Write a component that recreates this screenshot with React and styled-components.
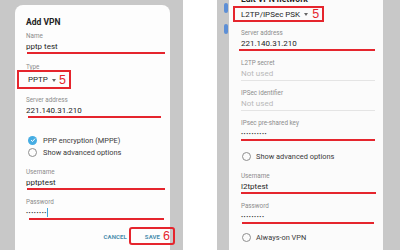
import React from "react";
import styled, { createGlobalStyle } from "styled-components";

const RED = "#e5252d";

const Global = createGlobalStyle`
  body {
    margin: 0;
    background: #fff;
    font-family: Roboto, "Liberation Sans", sans-serif;
  }
`;

const Page = styled.div`
  width: 400px;
  height: 250px;
  display: flex;
  justify-content: space-between;
  overflow: hidden;
  background: #fff;
`;

const Panel = styled.div`
  width: 183px;
  height: 250px;
  background: #c8c8c8;
  display: flex;
  padding-left: ${(p) => p.$padLeft || 0}px;
  box-sizing: border-box;
  overflow: hidden;
`;

const Gutter = styled.div`
  width: 12px;
  flex-shrink: 0;
  display: flex;
  flex-direction: column;
  padding: 3px 0 0 7px;
  box-sizing: border-box;
`;

const Pill = styled.div`
  width: 4px;
  height: 10px;
  border-radius: 2px;
  background: #5d8fd6;
  margin-bottom: 11px;
`;

const Card = styled.div`
  width: ${(p) => p.$width}px;
  flex-shrink: 0;
  margin-top: ${(p) => p.$top}px;
  height: 300px;
  background: ${(p) => p.$bg};
  border-radius: 8px 8px 0 0;
  padding: ${(p) => p.$padTop}px ${(p) => p.$padRight}px 0 ${(p) => p.$padLeft}px;
  box-sizing: border-box;
  display: flex;
  flex-direction: column;
`;

const Title = styled.div`
  font-size: 8.5px;
  line-height: 14px;
  font-weight: 700;
  color: #222;
`;

const Label = styled.div`
  font-size: 6.3px;
  line-height: 9px;
  color: #8c8c8c;
  margin-top: ${(p) => p.$mt || 0}px;
`;

const Value = styled.div`
  font-size: 8px;
  line-height: 11px;
  color: ${(p) => (p.$muted ? "#b9b9b9" : "#262626")};
  display: flex;
  align-items: center;
`;

const Dots = styled.span`
  font-size: 6px;
  letter-spacing: 0.6px;
  color: #222;
`;

const Cursor = styled.span`
  width: 1px;
  height: 9px;
  background: #3fa5dc;
  margin-left: 0;
`;

const Underline = styled.div`
  height: 2px;
  background: ${RED};
  margin-left: ${(p) => p.$ml || 0}px;
  margin-right: ${(p) => p.$mr || 0}px;
`;

const Divider = styled.div`
  height: 1px;
  background: #e4e4e4;
  margin-top: 1px;
`;

const TypeBox = styled.div`
  align-self: flex-start;
  display: flex;
  align-items: center;
  height: ${(p) => p.$h}px;
  box-sizing: border-box;
  border: 2px solid ${RED};
  margin-top: ${(p) => p.$mt}px;
  margin-left: ${(p) => p.$ml}px;
  padding: 0 3px 0 ${(p) => p.$pl}px;
  font-size: 8px;
  color: #262626;
`;

const Caret = styled.span`
  width: 0;
  height: 0;
  border-left: 2.5px solid transparent;
  border-right: 2.5px solid transparent;
  border-top: 3px solid #666;
  margin: 1px 0 0 4px;
`;

const Mark = styled.span`
  font-family: "Liberation Sans", Arial, sans-serif;
  font-size: 12.5px;
  line-height: 12px;
  color: ${RED};
  margin-left: ${(p) => p.$ml || 3}px;
`;

const Option = styled.div`
  display: flex;
  align-items: center;
  height: 12px;
  margin-top: ${(p) => p.$mt || 0}px;
  margin-left: ${(p) => p.$ml || 0}px;
  font-size: 7.4px;
  color: #3a3a3a;
`;

const Radio = styled.span`
  width: 9px;
  height: 9px;
  border-radius: 50%;
  box-sizing: border-box;
  border: ${(p) => (p.$checked ? "none" : "1px solid #8f8f8f")};
  background: ${(p) => (p.$checked ? "#46ade3" : "transparent")};
  margin-right: ${(p) => p.$gap}px;
  display: flex;
  align-items: center;
  justify-content: center;
  flex-shrink: 0;
`;

const Actions = styled.div`
  display: flex;
  justify-content: flex-end;
  align-items: center;
  margin-top: 7.5px;
  margin-right: -10px;
`;

const Action = styled.span`
  font-size: 6px;
  font-weight: 700;
  color: #4c8fae;
  letter-spacing: 0.1px;
`;

const SaveBox = styled.div`
  display: flex;
  align-items: center;
  height: 18px;
  box-sizing: border-box;
  border: 2px solid ${RED};
  border-radius: 3px;
  padding: 0 3px 0 14px;
  margin-left: 2px;
`;

const Field = ({ label, value, mt, muted, children }) => (
  <>
    <Label $mt={mt}>{label}</Label>
    <Value $muted={muted}>{children || value}</Value>
  </>
);

const Check = () => (
  <svg width="6" height="6" viewBox="0 0 6 6">
    <path d="M1 3.1 L2.5 4.5 L5 1.6" fill="none" stroke="#fff" strokeWidth="1" />
  </svg>
);

export default function App() {
  return (
    <Page>
      <Global />
      <Panel $padLeft={15}>
        <Card $width={155} $top={5} $bg="#fdfdfd" $padTop={10} $padLeft={11} $padRight={5}>
          <Title>Add VPN</Title>
          <Field label="Name" value="pptp test" mt={3} />
          <Underline $ml={1} />
          <Label $mt={8.5}>Type</Label>
          <TypeBox $h={19} $mt={-1.5} $ml={-9} $pl={9}>
            PPTP
            <Caret />
            <Mark>5</Mark>
          </TypeBox>
          <Field label="Server address" value="221.140.31.210" mt={6.5} />
          <Underline $ml={2} $mr={4} />
          <Option $mt={16.5} $ml={2}>
            <Radio $checked $gap={6}>
              <Check />
            </Radio>
            PPP encryption (MPPE)
          </Option>
          <Option $ml={2}>
            <Radio $gap={6} />
            Show advanced options
          </Option>
          <Field label="Username" value="pptptest" mt={9.5} />
          <Underline $ml={1} />
          <Field label="Password" mt={8}>
            <Dots>••••••••</Dots>
            <Cursor />
          </Field>
          <Underline $ml={3} $mr={1} />
          <Actions>
            <Action>CANCEL</Action>
            <SaveBox>
              <Action>SAVE</Action>
              <Mark>6</Mark>
            </SaveBox>
          </Actions>
        </Card>
      </Panel>
      <Panel>
        <Gutter>
          <Pill />
          <Pill />
        </Gutter>
        <Card $width={154} $top={-20} $bg="#fbfbfb" $padTop={12} $padLeft={12} $padRight={8}>
          <Title>Edit VPN network</Title>
          <TypeBox $h={16} $mt={0} $ml={-8} $pl={6}>
            L2TP/IPSec PSK
            <Caret />
            <Mark $ml={4}>5</Mark>
          </TypeBox>
          <Field label="Server address" value="221.140.31.210" mt={6.5} />
          <Underline $ml={-2} />
          <Field label="L2TP secret" value="Not used" muted mt={8} />
          <Divider />
          <Field label="IPSec identifier" value="Not used" muted mt={8.5} />
          <Divider />
          <Field label="IPsec pre-shared key" mt={8}>
            <Dots>••••••••••</Dots>
          </Field>
          <Underline />
          <Option $mt={9} $ml={1}>
            <Radio $gap={5} />
            Show advanced options
          </Option>
          <Field label="Username" value="l2tptest" mt={9.5} />
          <Underline $mr={-1} />
          <Field label="Password" mt={8}>
            <Dots>•••••••••</Dots>
          </Field>
          <Underline $ml={1} $mr={1} />
          <Option $mt={7.5} $ml={1}>
            <Radio $gap={5} />
            Always-on VPN
          </Option>
        </Card>
      </Panel>
    </Page>
  );
}
